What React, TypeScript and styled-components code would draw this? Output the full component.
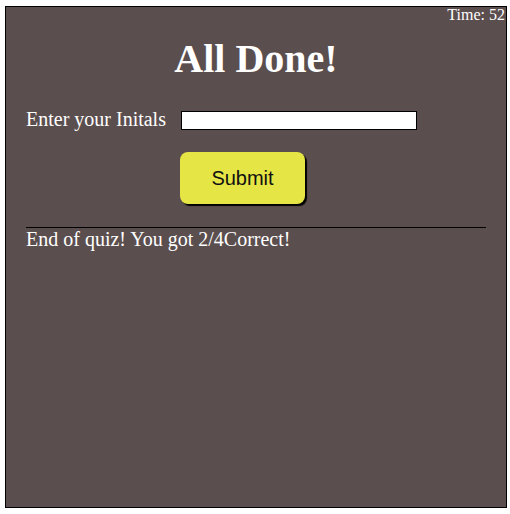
import React from 'react';
import styled, { createGlobalStyle } from 'styled-components';

const GlobalStyle = createGlobalStyle`
    body {
        margin: 0;
        background: #ffffff;
        font-family: "Liberation Serif", "Times New Roman", serif;
    }
`;

const Panel = styled.main`
    box-sizing: border-box;
    width: 502px;
    height: 502px;
    margin: 6px 0 0 5px;
    border: 1px solid #000;
    background-color: #5b4e4e;
    color: #fff;
`;

const TimerRow = styled.div`
    text-align: right;
    font-size: 16px;
    line-height: 16px;
    padding-right: 1px;
`;

const Title = styled.h1`
    margin: 13px 0 26px;
    text-align: center;
    font-size: 40px;
    line-height: 46px;
    font-weight: bold;
`;

const Content = styled.section`
    padding: 0 20px;
`;

const InputRow = styled.div`
    display: flex;
    align-items: flex-start;
    gap: 15px;
`;

const Label = styled.label`
    font-size: 20px;
    line-height: 23px;
`;

const InitialsInput = styled.input`
    box-sizing: border-box;
    width: 236px;
    height: 19px;
    margin-top: 3px;
    padding: 0 2px;
    border: 1px solid #000;
    background: #fff;
    outline: none;
`;

const SubmitButton = styled.button`
    display: block;
    box-sizing: border-box;
    width: 125px;
    height: 52px;
    margin: 21px 0 0 154px;
    border: none;
    border-radius: 8px;
    background-color: #e5e545;
    box-shadow: 2px 2px 1px #000;
    color: #111;
    font-family: "Liberation Sans", Arial, sans-serif;
    font-size: 20px;
    cursor: pointer;
`;

const Divider = styled.hr`
    margin: 23px 0 0;
    border: none;
    border-top: 1px solid #000;
`;

const Result = styled.p`
    margin: 0;
    font-size: 20px;
    line-height: 23px;
`;

const App = () => {
    const correct = 2;
    const total = 4;

    return (
        <>
            <GlobalStyle />
            <Panel>
                <TimerRow>Time: 52</TimerRow>
                <Title>All Done!</Title>
                <Content>
                    <InputRow>
                        <Label htmlFor="initials">Enter your Initals</Label>
                        <InitialsInput id="initials" type="text" />
                    </InputRow>
                    <SubmitButton type="button">Submit</SubmitButton>
                    <Divider />
                    <Result>End of quiz! You got {correct}/{total}Correct!</Result>
                </Content>
            </Panel>
        </>
    );
};

export default App;
